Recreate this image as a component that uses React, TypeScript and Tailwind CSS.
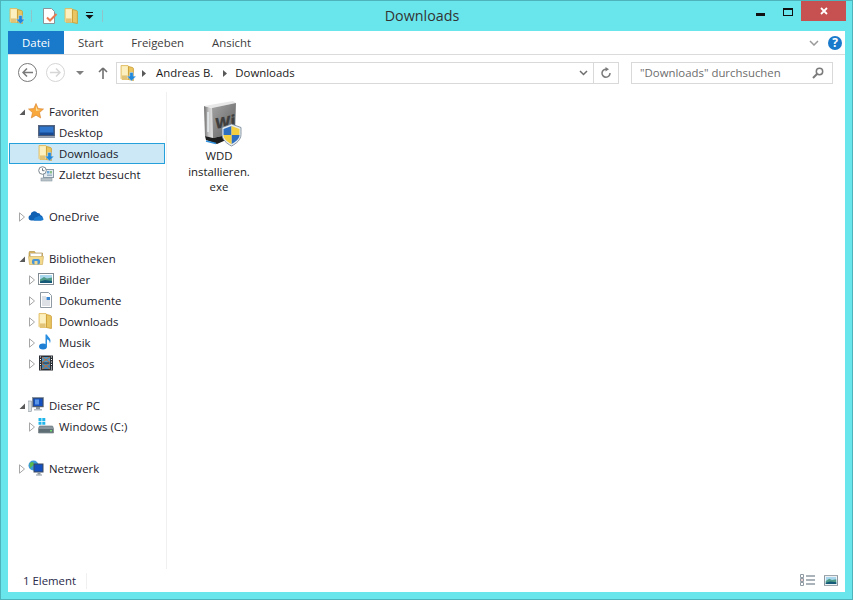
const font = "[font-family:'Open_Sans','Noto_Sans',sans-serif]";

function Folder({ arrow = false, className = "w-4 h-4" }: { arrow?: boolean; className?: string }) {
  return (
    <svg viewBox="0 0 16 16" className={className}>
      <path d="M1 .5h7l.5 1v13H2l-1-1z" fill="#f8e6a6" stroke="#e0b75c" strokeWidth="0.8" />
      <path d="M8.500 1.500l4 1c.6.2.9.6.9 1.200V15.500l-4.900-1z" fill="#e9c662" stroke="#c9992f" strokeWidth="0.8" />
      <rect x="2" y="1.500" width="5.500" height="9" fill="#fcf0c0" />
      <rect x="2" y="10.500" width="5.500" height="3.500" fill="#e2c478" />
      {arrow && (
        <path d="M9.800 7.500h3.400v3.700h2.800l-4.500 4.800-4.500-4.800h2.800z" fill="#1f87dc" stroke="#d9eefc" strokeWidth="0.4" />
      )}
    </svg>
  );
}

function Expander({ open = false }: { open?: boolean }) {
  return open ? (
    <svg viewBox="0 0 8 8" className="w-2 h-2">
      <path d="M7 1.500V7H1.500z" fill="#595959" />
    </svg>
  ) : (
    <svg viewBox="0 0 8 10" className="w-2 h-2.5">
      <path d="M1.500 .8L6.500 5l-5 4.200z" fill="#ffffff" stroke="#a6a6a6" />
    </svg>
  );
}

function Star() {
  return (
    <svg viewBox="0 0 16 16" className="w-4 h-4">
      <path d="M8 .5l2.200 5 5.300.5-4 3.600 1.200 5.400L8 12.200 3.300 15l1.200-5.400-4-3.600 5.300-.5z" fill="#f8a83c" stroke="#d9822b" strokeWidth="0.6" />
      <path d="M8 3l1.400 3.500 3.400.4L8 8z" fill="#fde3a1" />
    </svg>
  );
}

function DesktopIcon() {
  return (
    <svg viewBox="0 0 17 16" className="w-[17px] h-4">
      <rect x="0.500" y="1.500" width="16" height="10.500" fill="#3a4a68" stroke="#56657f" />
      <rect x="1.500" y="2.500" width="14" height="8.500" fill="#2f76cc" />
      <rect x="1.500" y="8.500" width="14" height="2.500" fill="#184a94" />
      <rect x="0" y="12.500" width="17" height="1.500" fill="#8d99a8" />
    </svg>
  );
}

function RecentIcon() {
  return (
    <svg viewBox="0 0 16 16" className="w-4 h-4">
      <rect x="5.500" y="3.500" width="10" height="8" fill="#e4ecf2" stroke="#8a9aa6" />
      <rect x="9" y="5" width="2.500" height="2.500" fill="#6ea8d6" />
      <rect x="12" y="5" width="2" height="2.500" fill="#8bc08b" />
      <rect x="9" y="8.500" width="5" height="1.500" fill="#9fb4c4" />
      <rect x="3" y="12" width="11" height="3" fill="#b9c2c8" stroke="#8a9aa6" strokeWidth="0.6" />
      <circle cx="4.500" cy="4.500" r="3.800" fill="#ffffff" stroke="#7b8790" />
      <path d="M4.500 2.300v2.400h2" fill="none" stroke="#4a5560" strokeWidth="0.8" />
    </svg>
  );
}

function CloudIcon() {
  return (
    <svg viewBox="0 0 16 16" className="w-4 h-4">
      <path d="M3 12.500a2.800 2.800 0 0 1-.4-5.500 3.700 3.700 0 0 1 6.800-2 3 3 0 0 1 3.200 2.300A2.700 2.700 0 0 1 13 12.500z" fill="#0f5fb3" />
      <path d="M6 12.500c-.5-2 1-3.800 3-3.600 1-1.200 3.500-1 4 .2 1.500.2 2.500 1.500 2.500 2.200 0 .7-.6 1.200-1.500 1.200z" fill="#1a7ad0" />
    </svg>
  );
}

function LibraryIcon() {
  return (
    <svg viewBox="0 0 16 16" className="w-4 h-4">
      <path d="M1 3l.5-1.500h5l1 1.500h7v3H1z" fill="#d7b25c" stroke="#a98a3d" strokeWidth="0.6" />
      <rect x="2.500" y="3.500" width="11" height="4" fill="#ffffff" stroke="#c8c8c8" strokeWidth="0.5" />
      <path d="M.500 6.500h15l-1 8h-13z" fill="#f2d98c" stroke="#c9a84f" strokeWidth="0.6" />
      <rect x="4" y="9" width="8" height="5.500" rx="2" fill="#4a95d6" />
      <rect x="6.500" y="11" width="3" height="3.500" fill="#f2d98c" />
    </svg>
  );
}

function PictureIcon({ className = "w-4 h-4" }: { className?: string }) {
  return (
    <svg viewBox="0 0 16 14" className={className}>
      <rect x="0.500" y="1.500" width="15" height="11" fill="#ffffff" stroke="#7f8a93" />
      <rect x="2" y="3" width="12" height="8" fill="#a9d8ee" />
      <path d="M2 7.500l4-2.500 3 1.500 5-1V11H2z" fill="#4e9a86" />
      <path d="M2 9.500l5-1.500 7 1V11H2z" fill="#155a78" />
    </svg>
  );
}

function DocIcon() {
  return (
    <svg viewBox="0 0 16 16" className="w-4 h-4">
      <path d="M2.500.5h8l3 3v12h-11z" fill="#ffffff" stroke="#8f9aa3" />
      <path d="M4 5h4M4 7h4M4 9h8M4 11h8M4 13h8" stroke="#a9b4be" strokeWidth="0.8" />
      <rect x="8.500" y="5" width="3.500" height="3" fill="#3a86cf" />
    </svg>
  );
}

function MusicIcon() {
  return (
    <svg viewBox="0 0 16 16" className="w-4 h-4">
      <ellipse cx="5" cy="12.500" rx="4" ry="3" fill="#1f7fd4" />
      <path d="M7.500 12.500V.5h1.500c.3 2 3.500 3 3.500 6.500 0 1-.3 1.700-.7 2.200.2-2.500-1.500-3.500-2.800-4v7.800z" fill="#2a8ee0" />
    </svg>
  );
}

function VideoIcon() {
  return (
    <svg viewBox="0 0 16 16" className="w-4 h-4">
      <rect x="1" y="0.500" width="14" height="15" fill="#2a2f35" />
      <rect x="4" y="2" width="8" height="5.500" fill="#4d97c9" />
      <rect x="4" y="8.500" width="8" height="5.500" fill="#3f86b8" />
      <path d="M4 2l8 5.500M12 2L4 7.500M4 8.500l8 5.500M12 8.500L4 14" stroke="#c2713a" strokeWidth="1" />
      <path d="M2 2h1M2 4.500h1M2 7h1M2 9.500h1M2 12h1M2 14h1M13 2h1M13 4.500h1M13 7h1M13 9.500h1M13 12h1M13 14h1" stroke="#ffffff" strokeWidth="1" />
    </svg>
  );
}

function PcIcon() {
  return (
    <svg viewBox="0 0 16 16" className="w-4 h-4">
      <rect x="0" y="4" width="3.500" height="10.500" fill="#d8dde0" stroke="#8a949c" strokeWidth="0.6" />
      <rect x="4.500" y="0.500" width="11" height="9.500" fill="#3c4a5c" stroke="#7a8794" strokeWidth="0.6" />
      <rect x="5.500" y="1.500" width="9" height="7.500" fill="#1450c0" />
      <path d="M7 2.500h4v5H7z" fill="#5b96e6" />
      <rect x="8" y="10" width="4" height="2" fill="#8a949c" />
      <rect x="6" y="12" width="8" height="1.500" fill="#b4bcc2" />
    </svg>
  );
}

function DriveIcon() {
  return (
    <svg viewBox="0 0 16 16" className="w-4 h-4">
      <path d="M.5 0h3v3h-3zM4.300 0h3v3h-3zM.5 3.700h3v3h-3zM4.300 3.700h3v3h-3z" fill="#1fb5ea" />
      <path d="M1.500 8h13l1 2.500v4.500H.500v-4.500z" fill="#8b979e" stroke="#606b72" strokeWidth="0.6" />
      <rect x="1" y="11" width="14" height="3.500" fill="#5f6d75" />
      <rect x="12" y="12" width="2" height="1.500" fill="#6fdc6f" />
    </svg>
  );
}

function NetworkIcon() {
  return (
    <svg viewBox="0 0 16 16" className="w-4 h-4">
      <circle cx="5.500" cy="5.500" r="5" fill="#3a9ad9" />
      <path d="M2 3c2-2 4-1 4 1s-3 2-3 4-2-3-1-5zM7 7c2 0 3 .5 2 2.500S6 10 7 7z" fill="#59b84f" />
      <rect x="5.500" y="3.500" width="10" height="9" fill="#3c4a5c" />
      <rect x="6.500" y="4.500" width="8" height="7" fill="#1450c0" />
      <rect x="9.500" y="12.500" width="3" height="2" fill="#8a949c" />
      <rect x="8" y="14.500" width="6" height="1" fill="#8a949c" />
    </svg>
  );
}

function WiiIcon() {
  return (
    <svg viewBox="0 0 46 48" className="w-[46px] h-[48px]">
      <defs>
        <linearGradient id="wiiFront" x1="0" y1="0" x2="1" y2="0">
          <stop offset="0" stopColor="#6a6a6a" />
          <stop offset="0.5" stopColor="#c4c4c4" />
          <stop offset="1" stopColor="#e4e4e4" />
        </linearGradient>
        <linearGradient id="wiiSide" x1="0" y1="0" x2="1" y2="1">
          <stop offset="0" stopColor="#a4a4a4" />
          <stop offset="1" stopColor="#5f5f5f" />
        </linearGradient>
      </defs>
      <path d="M8 6l8 2 1 30-8-2z" fill="url(#wiiFront)" />
      <path d="M8 6l29-5 3 2-24 5z" fill="#e8e8e8" />
      <path d="M16 8l24-5-1 30-22 5z" fill="url(#wiiSide)" />
      <path d="M12 12v20" stroke="#f4fbff" strokeWidth="1.200" />
      <path d="M9 36l8 2 22-5v3l-18 8-11-4z" fill="#1e1e1e" />
      <path d="M10 41l10 2.500" stroke="#2f8fdc" strokeWidth="1.300" />
      <text transform="translate(19 29) skewY(-10)" fontFamily="'Open Sans', sans-serif" fontWeight="800" fontSize="15" fill="#3f3f3f">
        Wi
      </text>
      <path d="M35.500 24l9.500 3.500v7c0 5-4.500 9-9.500 11.500-5-2.500-9.500-6.500-9.500-11.500v-7z" fill="#e6edf2" stroke="#6f8092" strokeWidth="0.8" />
      <path d="M35.500 26l-8 3v6h8zM35.500 35v9c4-2 8-5 8-9z" fill="#2f6fc0" />
      <path d="M35.500 26l8 3v6h-8zM35.500 35v9c-4-2-8-5-8-9z" fill="#f3cf3f" />
    </svg>
  );
}

function TreeRow({
  label,
  icon,
  level = 0,
  expander,
  selected = false,
}: {
  label: string;
  icon: React.ReactNode;
  level?: 0 | 1;
  expander?: "open" | "closed";
  selected?: boolean;
}) {
  return (
    <div className={`flex items-center h-[21px] ml-px mr-px border ${selected ? "bg-[#cce8f6] border-[#26a0da]" : "border-transparent"}`}>
      <div className={`flex items-center justify-center w-2 ${level === 0 ? "ml-2" : "ml-[18px]"}`}>
        {expander && <Expander open={expander === "open"} />}
      </div>
      <div className="ml-[2px] w-4 -translate-y-px">{icon}</div>
      <span className="ml-[5px] text-[11.4px] leading-none text-[#1a1a2a]">{label}</span>
    </div>
  );
}

export default function App() {
  return (
    <div className={`w-[853px] h-[600px] flex flex-col bg-[#69e6ec] border border-[#4fb3bb] overflow-hidden ${font}`}>
      {/* title bar */}
      <div className="h-[30px] grid grid-cols-[1fr_auto_1fr] pl-2 pr-[6px] shrink-0">
        <div className="flex items-center h-[30px] pb-[1px]">
          <Folder arrow />
          <div className="ml-[6px] w-px h-3 bg-[#8fc4ca]" />
          <svg viewBox="0 0 16 16" className="ml-[10px] w-4 h-4">
            <path d="M1.500.5h8l3 3v12h-11z" fill="#ffffff" stroke="#8a9499" />
            <path d="M5 9.500l3 3L14.500 6" fill="none" stroke="#e87a50" strokeWidth="2" />
          </svg>
          <div className="ml-[6px]">
            <Folder />
          </div>
          <svg viewBox="0 0 9 7" className="ml-[5px] w-[9px] h-[7px]">
            <path d="M1 0h7v1H1zM.5 3h8l-4 4z" fill="#111111" />
          </svg>
          <div className="ml-[8px] w-px h-3 bg-[#8fc4ca]" />
        </div>
        <div className="flex items-center justify-center h-[30px] mr-[11px] pb-[1px] text-[14.3px] text-[#333333]">Downloads</div>
        <div className="flex items-start justify-end">
          <div className="w-[9px] h-[3px] mt-[12px] bg-[#111111]" />
          <div className="ml-[18px] mt-[7px] w-[10px] h-[8px] border border-[#111111] border-t-2" />
          <div className="ml-[8px] w-[45px] h-[20px] bg-[#c75050] flex items-center justify-center">
            <svg viewBox="0 0 8 8" className="w-2 h-2">
              <path d="M1 1l6 6M7 1L1 7" stroke="#ffffff" strokeWidth="1.800" />
            </svg>
          </div>
        </div>
      </div>

      {/* window body */}
      <div className="flex-1 mx-[7px] mb-[7px] bg-white flex flex-col min-h-0">
        {/* ribbon tabs */}
        <div className="h-[24px] shrink-0 flex items-stretch border-b border-[#dadbdc] text-[11.4px] text-[#3c3c3c]">
          <div className="w-14 h-[23px] bg-[#1979ca] text-white flex items-center justify-center">Datei</div>
          <div className="ml-[14px] flex items-center">Start</div>
          <div className="ml-[28px] flex items-center">Freigeben</div>
          <div className="ml-[28px] flex items-center">Ansicht</div>
          <div className="ml-auto flex items-center pr-[4px]">
            <svg viewBox="0 0 10 6" className="w-[10px] h-[6px]">
              <path d="M1 1l4 4 4-4" fill="none" stroke="#9a9a9a" strokeWidth="1.500" />
            </svg>
            <div className="ml-[9px] mr-[-1px] w-[14px] h-[14px] rounded-full bg-[#1979ca] text-white text-[12px] leading-none font-bold flex items-center justify-center">?</div>
          </div>
        </div>

        {/* navigation */}
        <div className="h-[37px] shrink-0 flex items-start pt-[7px] pl-[10px]">
          <div className="w-[19px] h-[19px] mt-[1px] rounded-full border-[1.5px] border-[#7a7a7a] flex items-center justify-center">
            <svg viewBox="0 0 11 9" className="w-[11px] h-[9px]">
              <path d="M5 .5L1 4.500l4 4M1 4.500h10" fill="none" stroke="#7a7a7a" strokeWidth="1.500" />
            </svg>
          </div>
          <div className="ml-[9px] w-[19px] h-[19px] mt-[1px] rounded-full border-[1.5px] border-[#d6d6d6] flex items-center justify-center">
            <svg viewBox="0 0 11 9" className="w-[11px] h-[9px]">
              <path d="M6 .5l4 4-4 4M10 4.500H0" fill="none" stroke="#d6d6d6" strokeWidth="1.500" />
            </svg>
          </div>
          <svg viewBox="0 0 8 4" className="ml-[11px] mt-[9px] w-2 h-1">
            <path d="M0 0h8L4 4z" fill="#7f7f7f" />
          </svg>
          <svg viewBox="0 0 10 12" className="ml-[14px] mt-[5px] w-[10px] h-3">
            <path d="M5 1L1 5M5 1l4 4M5 1v11" fill="none" stroke="#707070" strokeWidth="1.600" />
          </svg>
          <div className="ml-[8px] w-[503px] h-[22px] border border-[#d9d9d9] flex items-center text-[11.4px] text-[#1a1a1a]">
            <div className="ml-[3px]">
              <Folder arrow />
            </div>
            <svg viewBox="0 0 4 7" className="ml-[6px] w-1 h-[7px]">
              <path d="M0 0l4 3.500L0 7z" fill="#595959" />
            </svg>
            <span className="ml-[10px]">Andreas B.</span>
            <svg viewBox="0 0 4 7" className="ml-[10px] w-1 h-[7px]">
              <path d="M0 0l4 3.500L0 7z" fill="#595959" />
            </svg>
            <span className="ml-[8px]">Downloads</span>
            <div className="ml-auto flex items-center h-full">
              <svg viewBox="0 0 9 6" className="mr-[5px] w-[9px] h-[6px]">
                <path d="M1 1l3.500 3.500L8 1" fill="none" stroke="#6e6e6e" strokeWidth="1.500" />
              </svg>
              <div className="w-[25px] h-full border-l border-[#d9d9d9] flex items-center justify-center">
                <svg viewBox="0 0 12 12" className="w-3 h-3">
                  <path d="M6.500 2.200A4 4 0 1 0 10 6" fill="none" stroke="#7a7a7a" strokeWidth="1.500" />
                  <path d="M5.500 0v4.500L9 2.200z" fill="#7a7a7a" />
                </svg>
              </div>
            </div>
          </div>
          <div className="ml-[12px] w-[202px] h-[22px] border border-[#d9d9d9] flex items-center text-[11.4px] text-[#6d6d6d] pl-[8px]">
            <span>"Downloads" durchsuchen</span>
            <svg viewBox="0 0 12 12" className="ml-auto mr-[8px] w-3 h-3">
              <circle cx="7.500" cy="4.500" r="3.200" fill="none" stroke="#7a7a7a" strokeWidth="1.500" />
              <path d="M5 7L1 11" stroke="#7a7a7a" strokeWidth="2" />
            </svg>
          </div>
        </div>

        {/* panes */}
        <div className="flex-1 flex min-h-0">
          <div className="w-[159px] shrink-0 border-r border-[#f0f0f0] pt-[9px]">
            <TreeRow label="Favoriten" icon={<Star />} expander="open" />
            <TreeRow label="Desktop" icon={<DesktopIcon />} level={1} />
            <TreeRow label="Downloads" icon={<Folder arrow />} level={1} selected />
            <TreeRow label="Zuletzt besucht" icon={<RecentIcon />} level={1} />
            <div className="h-[21px]" />
            <TreeRow label="OneDrive" icon={<CloudIcon />} expander="closed" />
            <div className="h-[21px]" />
            <TreeRow label="Bibliotheken" icon={<LibraryIcon />} expander="open" />
            <TreeRow label="Bilder" icon={<PictureIcon />} level={1} expander="closed" />
            <TreeRow label="Dokumente" icon={<DocIcon />} level={1} expander="closed" />
            <TreeRow label="Downloads" icon={<Folder />} level={1} expander="closed" />
            <TreeRow label="Musik" icon={<MusicIcon />} level={1} expander="closed" />
            <TreeRow label="Videos" icon={<VideoIcon />} level={1} expander="closed" />
            <div className="h-[21px]" />
            <TreeRow label="Dieser PC" icon={<PcIcon />} expander="open" />
            <TreeRow label="Windows (C:)" icon={<DriveIcon />} level={1} expander="closed" />
            <div className="h-[21px]" />
            <TreeRow label="Netzwerk" icon={<NetworkIcon />} expander="closed" />
          </div>
          <div className="flex-1 pl-[14px] pt-[8px]">
            <div className="w-[76px] flex flex-col items-center">
              <WiiIcon />
              <div className="text-[11.4px] leading-[15.5px] text-center text-[#1a1a1a]">
                WDD
                <br />
                installieren.
                <br />
                exe
              </div>
            </div>
          </div>
        </div>

        {/* status bar */}
        <div className="h-[23px] shrink-0 flex items-center text-[11.4px] text-[#2a2a4a]">
          <span className="ml-[15px]">1 Element</span>
          <div className="ml-[10px] w-px h-[16px] bg-[#f0f0f0]" />
          <svg viewBox="0 0 16 13" className="ml-auto w-4 h-[13px]">
            <path d="M.5.5h3v3h-3zM.5 4.500h3v3h-3zM.5 8.500h3v3h-3z" fill="#ffffff" stroke="#8f9aa3" />
            <path d="M6 2h9M6 6h9M6 10h9" stroke="#8f9aa3" strokeWidth="1.500" />
            <rect x="1.500" y="5.500" width="1" height="1" fill="#c0504d" />
          </svg>
          <div className="ml-[8px] mr-[7px]">
            <PictureIcon className="w-[14px] h-[13px]" />
          </div>
        </div>
      </div>
    </div>
  );
}
